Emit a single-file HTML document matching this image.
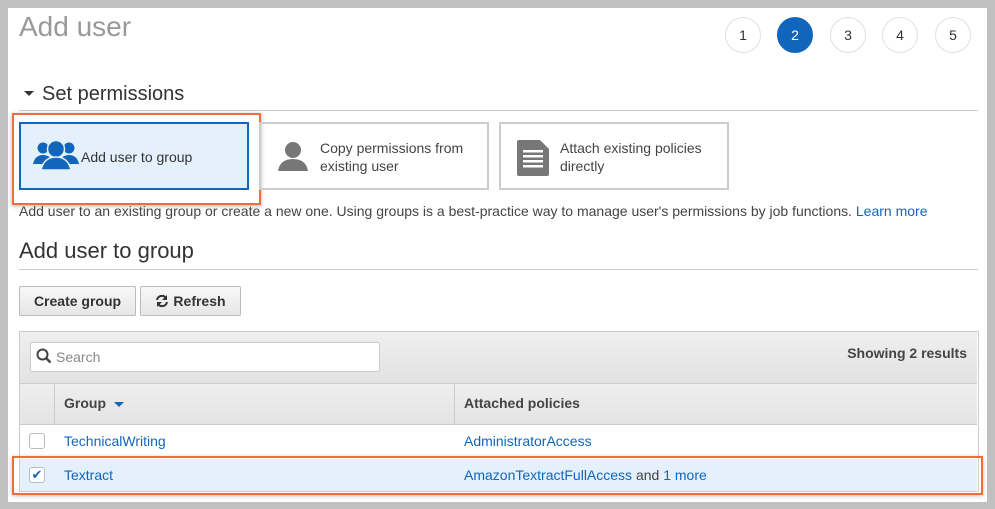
<!DOCTYPE html>
<html><head><style>
body{margin:0;width:995px;height:509px;background:#c0c0c0;font-family:"Liberation Sans",Arial,sans-serif;position:relative;overflow:hidden}
.p{position:absolute;left:8px;top:8px;width:979px;height:494px;background:#fff}
.a{position:absolute}
.circ{position:absolute;top:17px;width:34px;height:34px;border:1px solid #e0e0e0;border-radius:50%;text-align:center;line-height:34px;font-size:14px;color:#333;background:#fff}
.card{position:absolute;top:122px;height:64px;width:226px;border:2px solid #ccc;font-size:14px;color:#444}
.btn{position:absolute;top:286px;height:28px;border:1px solid #bbb;border-radius:2px;background:linear-gradient(#f8f8f8,#e6e6e6);font-weight:bold;font-size:14px;color:#333;line-height:28px;text-align:center}
a,.lk{color:#1166bb;text-decoration:none}
</style></head><body>
<div class="p"></div>
<div class="a" style="left:19px;top:11px;font-size:28px;color:#999">Add user</div>
<div class="circ" style="left:725px">1</div>
<div class="circ" style="left:777px;background:#1166bb;border-color:#1166bb;color:#fff">2</div>
<div class="circ" style="left:830px">3</div>
<div class="circ" style="left:882px">4</div>
<div class="circ" style="left:935px">5</div>
<div class="a" style="left:24px;top:91px;width:0;height:0;border-left:5px solid transparent;border-right:5px solid transparent;border-top:5px solid #333"></div>
<div class="a" style="left:42px;top:83px;font-size:20px;color:#333">Set permissions</div>
<div class="a" style="left:19px;top:110px;width:959px;height:1px;background:#ccc"></div>

<div class="a" style="left:12px;top:113px;width:245px;height:88px;border:2px solid #f26b3a;box-shadow:0 1px 4px rgba(0,0,0,.3)"></div>
<div class="card" style="left:19px;border-color:#1166bb;background:#e4f0fc;color:#333">
<svg class="a" style="left:12px;top:16px" width="46" height="30" viewBox="0 0 46 30"><g fill="#1166bb"><circle cx="10" cy="8" r="5.5"/><circle cx="36" cy="8" r="5.5"/><path d="M0 24q2-9 10-9 8 0 10 9z"/><path d="M26 24q2-9 10-9 8 0 10 9z"/><circle cx="23" cy="9" r="8.5" stroke="#e4f0fc" stroke-width="1.5"/><path d="M8 30q3-13 15-13 12 0 15 13z" stroke="#e4f0fc" stroke-width="1.5"/></g></svg>
<div class="a" style="left:60px;top:25px">Add user to group</div></div>
<div class="card" style="left:259px">
<svg class="a" style="left:16px;top:16px" width="32" height="32" viewBox="0 0 32 32"><g fill="#777"><circle cx="16" cy="10" r="8"/><path d="M1 31q2-12 15-12 13 0 15 12z"/></g></svg>
<div class="a" style="left:59px;top:15px;line-height:18px">Copy permissions from<br>existing user</div></div>
<div class="card" style="left:499px">
<svg class="a" style="left:16px;top:16px" width="32" height="36" viewBox="0 0 32 36"><path d="M2 0h21l9 9v25a2 2 0 0 1-2 2H2a2 2 0 0 1-2-2V2a2 2 0 0 1 2-2z" fill="#777"/><g fill="#fff"><rect x="6" y="10" width="20" height="2.5"/><rect x="6" y="15" width="20" height="2.5"/><rect x="6" y="20" width="20" height="2.5"/><rect x="6" y="25" width="20" height="2.5"/></g></svg>
<div class="a" style="left:59px;top:15px;line-height:18px">Attach existing policies<br>directly</div></div>

<div class="a" style="left:19px;top:203px;font-size:14px;color:#444">Add user to an existing group or create a new one. Using groups is a best-practice way to manage user's permissions by job functions. <span class="lk">Learn more</span></div>
<div class="a" style="left:19px;top:238px;font-size:22px;color:#333">Add user to group</div>
<div class="a" style="left:19px;top:269px;width:959px;height:1px;background:#ccc"></div>
<div class="btn" style="left:19px;width:115px">Create group</div>
<div class="btn" style="left:140px;width:99px"><svg width="14" height="14" viewBox="0 0 14 14" style="vertical-align:-2px;margin-right:4px"><g fill="none" stroke="#333" stroke-width="2"><path d="M2 6a5 5 0 0 1 9-2"/><path d="M12 8a5 5 0 0 1-9 2"/></g><path d="M12 1v5H7z" fill="#333"/><path d="M2 13V8h5z" fill="#333"/></svg>Refresh</div>

<div class="a" style="left:19px;top:331px;width:958px;height:160px;border:1px solid #ccc;border-bottom:none"></div>
<div class="a" style="left:20px;top:332px;width:957px;height:51px;background:linear-gradient(#efefef,#e2e2e2);border-bottom:1px solid #ccc"></div>
<div class="a" style="left:30px;top:342px;width:348px;height:28px;border:1px solid #ccc;border-radius:3px;background:#fff"></div>
<svg class="a" style="left:36px;top:348px" width="16" height="16" viewBox="0 0 16 16"><circle cx="6.5" cy="6.5" r="5" fill="none" stroke="#444" stroke-width="2"/><path d="M10 10l4.5 4.5" stroke="#444" stroke-width="2.5"/></svg>
<div class="a" style="left:56px;top:349px;font-size:14px;color:#888">Search</div>
<div class="a" style="right:28px;top:345px;font-size:14px;font-weight:bold;color:#444">Showing 2 results</div>
<div class="a" style="left:20px;top:384px;width:957px;height:40px;background:linear-gradient(#eeeeee,#e4e4e4);border-bottom:1px solid #ccc"></div>
<div class="a" style="left:54px;top:384px;width:1px;height:40px;background:#ccc"></div>
<div class="a" style="left:454px;top:384px;width:1px;height:40px;background:#ccc"></div>
<div class="a" style="left:64px;top:395px;font-size:14px;font-weight:bold;color:#444">Group</div>
<div class="a" style="left:114px;top:402px;border-left:5px solid transparent;border-right:5px solid transparent;border-top:5px solid #1166bb"></div>
<div class="a" style="left:464px;top:395px;font-size:14px;font-weight:bold;color:#444">Attached policies</div>
<div class="a" style="left:29px;top:433px;width:14px;height:14px;border:1px solid #bbb;border-radius:3px;background:#fff"></div>
<div class="a lk" style="left:64px;top:433px;font-size:14px">TechnicalWriting</div>
<div class="a lk" style="left:464px;top:433px;font-size:14px">AdministratorAccess</div>
<div class="a" style="left:20px;top:459px;width:957px;height:32px;background:#e4f0fc;border-bottom:1px solid #ccc"></div>
<div class="a" style="left:29px;top:467px;width:14px;height:14px;border:1px solid #bbb;border-radius:3px;background:#fff;color:#1166bb;font-size:13px;line-height:14px;text-align:center">&#10004;</div>
<div class="a lk" style="left:64px;top:467px;font-size:14px">Textract</div>
<div class="a" style="left:464px;top:467px;font-size:14px;color:#444"><span class="lk">AmazonTextractFullAccess</span> and <span class="lk">1 more</span></div>
<div class="a" style="left:12px;top:456px;width:967px;height:35px;border:2px solid #f26b3a;box-shadow:0 1px 4px rgba(0,0,0,.25)"></div>
</body></html>
